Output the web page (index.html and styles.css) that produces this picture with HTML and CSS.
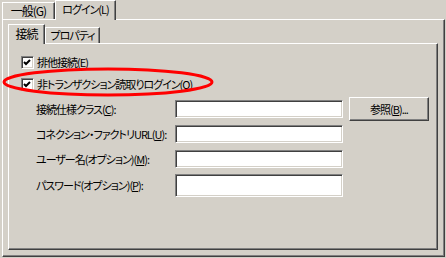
FILE: index.html
```html
<!DOCTYPE html>
<html lang="ja">
<head>
    <meta charset="UTF-8">
    <title>ログイン設定</title>
    <link rel="stylesheet" href="styles.css">
</head>
<body>
    <div class="dialog">
        <div class="tabs outer-tabs">
            <div class="tab tab-general">一般(G)</div>
            <div class="tab tab-login active">ログイン(L)</div>
        </div>

        <div class="panel outer-panel">
            <div class="tabs inner-tabs">
                <div class="tab tab-conn active">接続</div>
                <div class="tab tab-prop">プロパティ</div>
            </div>

            <div class="panel inner-panel">
                <label class="check">
                    <span class="box"><svg width="9" height="9" viewBox="0 0 9 9"><polyline points="1,4 3,6 7,2" /></svg></span>
                    <span>排他接続(<u>E</u>)</span>
                </label>
                <label class="check">
                    <span class="box"><svg width="9" height="9" viewBox="0 0 9 9"><polyline points="1,4 3,6 7,2" /></svg></span>
                    <span>非トランザクション読取りログイン(<u>O</u>)</span>
                </label>

                <div class="form">
                    <span class="label">接続仕様クラス(<u>C</u>):</span>
                    <span class="field"></span>
                    <button class="btn">参照(<u>B</u>)...</button>

                    <span class="label">コネクション・ファクトリURL(<u>U</u>):</span>
                    <span class="field"></span>
                    <span></span>

                    <span class="label">ユーザー名(オプション)(<u>M</u>):</span>
                    <span class="field"></span>
                    <span></span>

                    <span class="label">パスワード(オプション)(<u>P</u>):</span>
                    <span class="field tall"></span>
                    <span></span>
                </div>
            </div>
        </div>

        <!-- annotation -->
        <svg class="mark" width="446" height="258">
            <ellipse cx="108" cy="82" rx="104" ry="13" />
        </svg>
    </div>
</body>
</html>
```

FILE: styles.css
```css
* { box-sizing: border-box; }
body {
    margin: 0;
    background: #d4d0c8;
    font-family: "Noto Sans CJK JP", "DejaVu Sans", sans-serif;
    font-size: 11px;
    letter-spacing: -1px;
    font-feature-settings: "palt" 1;
    color: #000;
}
.dialog {
    position: relative;
    width: 446px;
    height: 258px;
}
.tabs {
    display: flex;
    align-items: flex-end;
}
.outer-tabs {
    height: 19px;
    padding-left: 2px;
}
.inner-tabs {
    height: 19px;
}
.tab {
    height: 17px;
    display: flex;
    align-items: center;
    justify-content: center;
    border-top: 1px solid #fff;
    border-left: 1px solid #fff;
    border-right: 1px solid #404040;
    box-shadow: inset -1px 0 #808080;
    background: #d4d0c8;
    line-height: 1;
    white-space: nowrap;
}
.tab.active {
    height: 20px;
    margin-bottom: -1px;
    position: relative;
    z-index: 1;
    padding-bottom: 2px;
}
.tab-general { width: 53px; font-size: 12px; }
.tab-login { width: 61px; }
.tab-conn { width: 37px; font-size: 12px; }
.tab-prop { width: 55px; height: 16px; }

.panel {
    border-top: 1px solid #fff;
    border-left: 1px solid #fff;
    border-right: 1px solid #404040;
    border-bottom: 1px solid #404040;
    box-shadow: inset -1px -1px #808080;
}
.outer-panel {
    margin-left: 2px;
    width: 443px;
    height: 238px;
    padding: 4px 0 0 5px;
}
.inner-panel {
    width: 430px;
    height: 207px;
    padding: 7px 0 0 12px;
}
.check {
    display: flex;
    align-items: center;
    gap: 3px;
    height: 22px;
    white-space: nowrap;
}
.box {
    width: 13px;
    height: 13px;
    display: flex;
    align-items: center;
    justify-content: center;
    background: #fff;
    border-top: 1px solid #808080;
    border-left: 1px solid #808080;
    border-right: 1px solid #fff;
    border-bottom: 1px solid #fff;
    box-shadow: inset 1px 1px #404040, inset -1px -1px #d4d0c8;
}
.box polyline {
    fill: none;
    stroke: #000;
    stroke-width: 2;
}
.form {
    display: grid;
    grid-template-columns: 133px 168px 80px;
    grid-template-rows: 24px 24px 24px 26px;
    column-gap: 6px;
    row-gap: 1px;
    align-items: center;
    margin: 2px 0 0 15px;
}
.label { white-space: nowrap; }
.field {
    height: 18px;
    background: #fff;
    border-top: 1px solid #808080;
    border-left: 1px solid #808080;
    border-right: 1px solid #fff;
    border-bottom: 1px solid #fff;
    box-shadow: inset 1px 1px #404040, inset -1px -1px #d4d0c8;
}
.field.tall { height: 23px; }
.btn {
    height: 24px;
    padding: 0;
    font: inherit;
    letter-spacing: inherit;
    color: #000;
    background: #d4d0c8;
    border-top: 1px solid #fff;
    border-left: 1px solid #fff;
    border-right: 1px solid #404040;
    border-bottom: 1px solid #404040;
    box-shadow: inset -1px -1px #808080;
}
u { text-underline-offset: 1px; }
.mark {
    position: absolute;
    left: 0;
    top: 0;
    pointer-events: none;
}
.mark ellipse {
    fill: none;
    stroke: #f00;
    stroke-width: 3;
}
```
